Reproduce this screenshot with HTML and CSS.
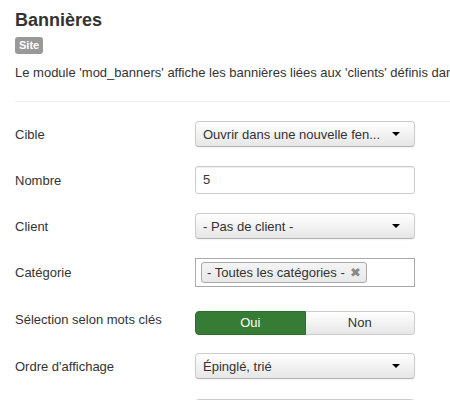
FILE: index.html
```html
<!DOCTYPE html>
<html lang="fr">
<head>
    <meta charset="UTF-8">
    <title>Bannières</title>
    <link rel="stylesheet" href="styles.css">
</head>
<body>
    <h2 class="title">Bannières</h2>
    <div class="badge-line"><span class="badge">Site</span></div>
    <p class="desc">Le module 'mod_banners' affiche les bannières liées aux 'clients' définis dans le composant Bannières.</p>
    <hr class="sep">

    <div class="form">
        <div class="row">
            <label class="label">Cible</label>
            <div class="select">Ouvrir dans une nouvelle fen... <span class="caret"></span></div>
        </div>
        <div class="row">
            <label class="label">Nombre</label>
            <div class="input">5</div>
        </div>
        <div class="row">
            <label class="label">Client</label>
            <div class="select">- Pas de client - <span class="caret"></span></div>
        </div>
        <div class="row">
            <label class="label">Catégorie</label>
            <div class="chosen">
                <span class="chip">- Toutes les catégories - <span class="chip-close">&#x2716;</span></span>
            </div>
        </div>
        <div class="row row-toggle">
            <label class="label">Sélection selon mots clés</label>
            <div class="toggle">
                <span class="toggle-btn active">Oui</span>
                <span class="toggle-btn">Non</span>
            </div>
        </div>
        <div class="row">
            <label class="label">Ordre d'affichage</label>
            <div class="select">Épinglé, trié <span class="caret"></span></div>
        </div>
        <div class="row">
            <label class="label"></label>
            <div class="select"></div>
        </div>
    </div>
</body>
</html>
```

FILE: styles.css
```css
body {
    margin: 0;
    padding: 0 0 0 15px;
    font-family: "Liberation Sans", Arial, sans-serif;
    font-size: 13px;
    color: #333;
    background: #fff;
    overflow: hidden;
}

.title {
    font-size: 18px;
    font-weight: bold;
    line-height: 24px;
    margin: 8px 0 0;
}

.badge-line {
    height: 17px;
    margin-top: 5px;
}

.badge {
    display: inline-block;
    height: 17px;
    line-height: 17px;
    padding: 0 4px;
    font-size: 11px;
    font-weight: bold;
    color: #fff;
    background: #999;
    border-radius: 3px;
    vertical-align: top;
}

.desc {
    margin: 10px 0 0;
    line-height: 18px;
    white-space: nowrap;
    overflow: hidden;
}

.sep {
    border: 0;
    border-top: 1px solid #eee;
    margin: 19px 0 9px;
}

.row {
    display: flex;
    align-items: center;
    height: 46px;
}

.row-toggle {
    height: 48px;
}

.label {
    width: 180px;
    flex-shrink: 0;
}

.select {
    box-sizing: border-box;
    width: 220px;
    height: 26px;
    padding: 0 8px 0 7px;
    border: 1px solid #ccc;
    border-bottom-color: #b3b3b3;
    border-radius: 4px;
    background: linear-gradient(#fff, #e6e6e6);
    box-shadow: 0 1px 2px rgba(0, 0, 0, 0.05);
    display: flex;
    align-items: center;
    justify-content: space-between;
    white-space: nowrap;
}

.caret {
    width: 0;
    height: 0;
    margin-right: 6px;
    border-top: 4px solid #000;
    border-left: 4px solid transparent;
    border-right: 4px solid transparent;
}

.input {
    box-sizing: border-box;
    width: 220px;
    height: 28px;
    padding: 0 7px;
    line-height: 26px;
    border: 1px solid #ccc;
    border-radius: 3px;
    background: #fff;
    box-shadow: inset 0 1px 1px rgba(0, 0, 0, 0.075);
}

.chosen {
    box-sizing: border-box;
    width: 220px;
    height: 29px;
    padding: 0 5px;
    border: 1px solid #aaa;
    background: #fff;
    display: flex;
    align-items: center;
}

.chip {
    box-sizing: border-box;
    height: 21px;
    line-height: 19px;
    padding: 0 5px;
    border: 1px solid #aaa;
    border-radius: 3px;
    background: linear-gradient(#f4f4f4, #e8e8e8);
    white-space: nowrap;
}

.chip-close {
    color: #888;
    font-size: 13px;
    margin-left: 2px;
}

.toggle {
    display: flex;
    width: 220px;
    height: 24px;
    margin-top: 7px;
}

.toggle-btn {
    flex: 1;
    box-sizing: border-box;
    display: flex;
    align-items: center;
    justify-content: center;
    border: 1px solid #ccc;
    border-left: 0;
    border-radius: 0 4px 4px 0;
    background: linear-gradient(#fff, #e6e6e6);
}

.toggle-btn.active {
    border: 1px solid #2f6e2a;
    border-radius: 4px 0 0 4px;
    background: #367c34;
    color: #fff;
}
```
